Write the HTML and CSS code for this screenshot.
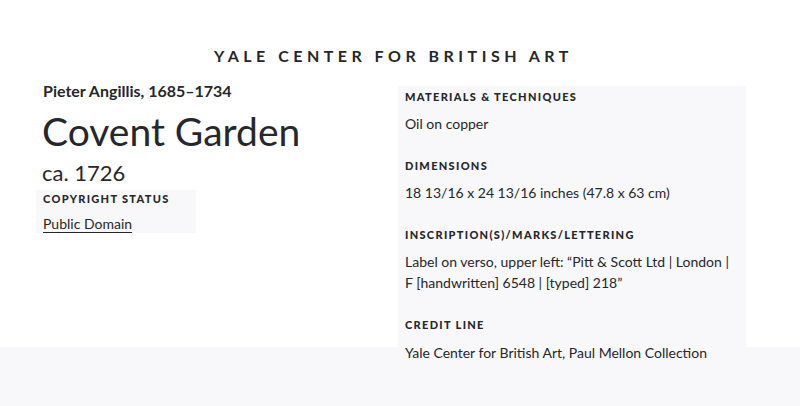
FILE: index.html
```html
<!DOCTYPE html>
<html>
<head>
<meta charset="utf-8">
<link rel="stylesheet" href="styles.css">
</head>
<body>
<div class="page">
  <header class="header">YALE CENTER FOR BRITISH ART</header>
  <main class="content">
    <section class="left">
      <div class="artist">Pieter Angillis, 1685–1734</div>
      <h1 class="title">Covent Garden</h1>
      <div class="date">ca. 1726</div>
      <div class="copyright">
        <div class="label">Copyright Status</div>
        <a class="value link" href="#">Public Domain</a>
      </div>
    </section>
    <section class="right">
      <div class="field">
        <div class="label">Materials &amp; Techniques</div>
        <div class="value">Oil on copper</div>
      </div>
      <div class="field">
        <div class="label">Dimensions</div>
        <div class="value">18 13/16 x 24 13/16 inches (47.8 x 63 cm)</div>
      </div>
      <div class="field">
        <div class="label">Inscription(s)/Marks/Lettering</div>
        <div class="value">Label on verso, upper left: “Pitt &amp; Scott Ltd | London | F [handwritten] 6548 | [typed] 218”</div>
      </div>
      <div class="field">
        <div class="label">Credit Line</div>
        <div class="value credit">Yale Center for British Art, Paul Mellon Collection</div>
      </div>
    </section>
  </main>
</div>
</body>
</html>
```

FILE: styles.css
```css
html {
  margin: 0;
  padding: 0;
  min-height: 100%;
  background: linear-gradient(to bottom, #ffffff 0, #ffffff 347px, #f8f8fa 347px, #f8f8fa 100%);
}
body {
  margin: 0;
  padding: 0;
  font-family: Lato, "Open Sans", sans-serif;
  color: #26272b;
}
.page {
  padding-bottom: 40px;
}
.header {
  text-align: center;
  padding-top: 45px;
  padding-right: 13px;
  font-size: 16px;
  font-weight: 700;
  letter-spacing: 0.28em;
  line-height: 22px;
  color: #26272b;
}
.content {
  display: flex;
  align-items: flex-start;
  padding-left: 36px;
  margin-top: 13px;
}
.left {
  width: 362px;
}
.artist {
  font-size: 16px;
  font-weight: 700;
  line-height: 22px;
  padding-left: 7px;
}
.title {
  margin: 0;
  padding-top: 4px;
  font-size: 39px;
  font-weight: 400;
  line-height: 50px;
  padding-left: 6px;
}
.date {
  font-size: 22px;
  line-height: 28px;
  padding-left: 6px;
  padding-top: 3px;
  padding-bottom: 3px;
}
.copyright {
  background: #f8f8fa;
  width: 153px;
  height: 43px;
  padding-left: 7px;
}
.label {
  font-size: 11px;
  font-weight: 900;
  letter-spacing: 0.12em;
  text-transform: uppercase;
  line-height: 16px;
}
.copyright .label {
  padding-top: 1px;
}
.value {
  font-size: 14px;
  line-height: 21px;
}
.link {
  display: inline-block;
  margin-top: 6px;
  color: #26272b;
  text-decoration: underline;
  text-underline-offset: 3px;
}
.right {
  width: 334px;
  margin-top: 6px;
  padding: 3px 7px 0;
  background: #f8f8fa;
}
.field {
  margin-bottom: 24px;
}
.field:last-child {
  margin-bottom: 0;
}
.field .label {
  margin-bottom: 8px;
}
.field .credit {
  margin-top: 9px;
}
```
